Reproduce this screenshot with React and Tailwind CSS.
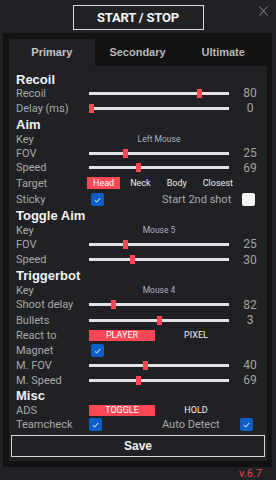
import React from "react";

const LABEL = "w-[73px] shrink-0 text-[11px] text-[#a9a9a9] font-['Roboto',sans-serif] leading-none";

function Header({ h, children }) {
  return (
    <div className={`flex items-center ${h}`}>
      <span className="text-[13px] font-bold text-[#f2f2f2] font-['Liberation_Sans',Arial,sans-serif] leading-none">
        {children}
      </span>
    </div>
  );
}

function Slider({ value, max }) {
  const left = (value / max) * 135;
  return (
    <div className="relative w-[140px] h-[9px] flex items-center shrink-0">
      <div className="w-full h-[3px] bg-[#e3e3e3]" />
      <div className="absolute top-0 w-[5px] h-[9px] bg-[#ff4655]" style={{ left: `${left}px` }} />
    </div>
  );
}

function SliderRow({ h, label, value, max }) {
  return (
    <div className={`flex items-center ${h}`}>
      <span className={LABEL}>{label}</span>
      <Slider value={value} max={max} />
      <span className="ml-[4px] w-[34px] text-center text-[12px] text-[#a3a3a3] font-['Roboto',sans-serif] leading-none">
        {value}
      </span>
    </div>
  );
}

function KeyRow({ h, value }) {
  return (
    <div className={`flex items-center ${h}`}>
      <span className={LABEL}>Key</span>
      <span className="w-[140px] text-center text-[8.5px] text-[#aab2c0] font-['Roboto',sans-serif] leading-none">
        {value}
      </span>
    </div>
  );
}

function Check({ on = true }) {
  if (!on) return <div className="w-[13px] h-[13px] rounded-[2px] bg-[#f4f4f4] shrink-0" />;
  return (
    <div className="w-[13px] h-[13px] rounded-[2px] bg-[#0d5fc7] shrink-0 flex items-center justify-center">
      <svg width="7" height="6" viewBox="0 0 7 6">
        <path d="M0.8 3.2 L2.7 5 L6.2 1" fill="none" stroke="#ffffff" strokeWidth="1" />
      </svg>
    </div>
  );
}

function Choice({ h, label, a, b }) {
  return (
    <div className={`flex items-center ${h}`}>
      <span className={LABEL}>{label}</span>
      <div className="w-[140px] flex justify-between font-['Roboto',sans-serif] text-[9px] leading-none">
        <div className="w-[66px] h-[11px] bg-[#ff4655] text-[#ffffff] flex items-center justify-center">{a}</div>
        <div className="w-[66px] h-[11px] text-[#eef1f6] flex items-center justify-center">{b}</div>
      </div>
    </div>
  );
}

export default function App() {
  return (
    <div className="w-[276px] h-[480px] bg-[#202124] relative overflow-hidden font-['Roboto',sans-serif]">
      {/* top bar */}
      <div className="h-[33px] pt-[5px] flex justify-center">
        <div className="w-[131px] h-[25px] border border-[#dcdcdc] flex items-center justify-center">
          <span className="text-[13px] font-bold text-[#f4f4f4] font-['Roboto',sans-serif] leading-none tracking-[-0.2px]">
            START / STOP
          </span>
        </div>
      </div>
      <svg className="absolute left-[259px] top-[6px]" width="9" height="10" viewBox="0 0 9 10">
        <path d="M0.5 0.5 L8.5 9.5 M8.5 0.5 L0.5 9.5" stroke="#8c8c8c" strokeWidth="1" />
      </svg>

      {/* dark panel */}
      <div className="ml-[3px] w-[269px] bg-[#121212] p-[6px]">
        <div className="flex h-[27px] text-[11px] font-bold font-['Liberation_Sans',Arial,sans-serif]">
          <div className="w-[86px] bg-[#202124] flex items-center justify-center text-[#c4c4c4]">Primary</div>
          <div className="w-[86px] flex items-center justify-center text-[#b8b8b8]">Secondary</div>
          <div className="w-[86px] flex items-center justify-center text-[#b8b8b8]">Ultimate</div>
        </div>
        <div className="w-[258px] bg-[#202124] pl-[7px] pt-[6px] pb-[4px]">
          <Header h="h-[14px]">Recoil</Header>
          <SliderRow h="h-[14px]" label="Recoil" value={80} max={100} />
          <SliderRow h="h-[16px]" label="Delay (ms)" value={0} max={100} />
          <Header h="h-[16px]">Aim</Header>
          <KeyRow h="h-[14px]" value="Left Mouse" />
          <SliderRow h="h-[14px]" label="FOV" value={25} max={100} />
          <SliderRow h="h-[15px]" label="Speed" value={69} max={200} />
          <div className="flex items-center h-[16px]">
            <span className="w-[71px] shrink-0 text-[11px] text-[#a9a9a9] leading-none">Target</span>
            <div className="flex gap-[4px] text-[9px] leading-none">
              <div className="h-[12px] px-[6px] bg-[#ff4655] text-[#ffffff] flex items-center">Head</div>
              <div className="h-[12px] px-[6px] text-[#ececec] flex items-center">Neck</div>
              <div className="h-[12px] px-[6px] text-[#ececec] flex items-center">Body</div>
              <div className="h-[12px] px-[6px] text-[#e2eaf6] flex items-center">Closest</div>
            </div>
          </div>
          <div className="flex items-center h-[17px]">
            <span className="w-[75px] shrink-0 text-[11px] text-[#a9a9a9] leading-none">Sticky</span>
            <Check />
            <span className="ml-[58px] w-[80px] text-[11px] text-[#a9a9a9] leading-none">Start 2nd shot</span>
            <Check on={false} />
          </div>
          <Header h="h-[15px]">Toggle Aim</Header>
          <KeyRow h="h-[14px]" value="Mouse 5" />
          <SliderRow h="h-[14px]" label="FOV" value={25} max={100} />
          <SliderRow h="h-[17px]" label="Speed" value={30} max={100} />
          <Header h="h-[15px]">Triggerbot</Header>
          <KeyRow h="h-[14px]" value="Mouse 4" />
          <SliderRow h="h-[15px]" label="Shoot delay" value={82} max={500} />
          <SliderRow h="h-[16px]" label="Bullets" value={3} max={6} />
          <Choice h="h-[15px]" label="React to" a="PLAYER" b="PIXEL" />
          <div className="flex items-center h-[15px]">
            <span className="w-[75px] shrink-0 text-[11px] text-[#a9a9a9] leading-none">Magnet</span>
            <Check />
          </div>
          <SliderRow h="h-[14px]" label="M. FOV" value={40} max={100} />
          <SliderRow h="h-[16px]" label="M. Speed" value={69} max={200} />
          <Header h="h-[15px]">Misc</Header>
          <Choice h="h-[14px]" label="ADS" a="TOGGLE" b="HOLD" />
          <div className="flex items-center h-[15px]">
            <span className={LABEL}>Teamcheck</span>
            <Check />
            <span className="ml-[60px] w-[78px] text-[11px] text-[#a9a9a9] leading-none">Auto Detect</span>
            <Check />
          </div>
          <div className="mt-[3px] ml-[-5px] w-[254px] h-[22px] border border-[#d6d6d6] flex items-center justify-center">
            <span className="text-[12px] font-bold text-[#f2f2f2] font-['Liberation_Sans',Arial,sans-serif] leading-none">Save</span>
          </div>
        </div>
      </div>
      <div className="h-[13px] flex items-center justify-end pr-[14px]">
        <span className="text-[11px] text-[#e0444c] leading-none font-['Roboto',sans-serif]">v.6.7</span>
      </div>
    </div>
  );
}
